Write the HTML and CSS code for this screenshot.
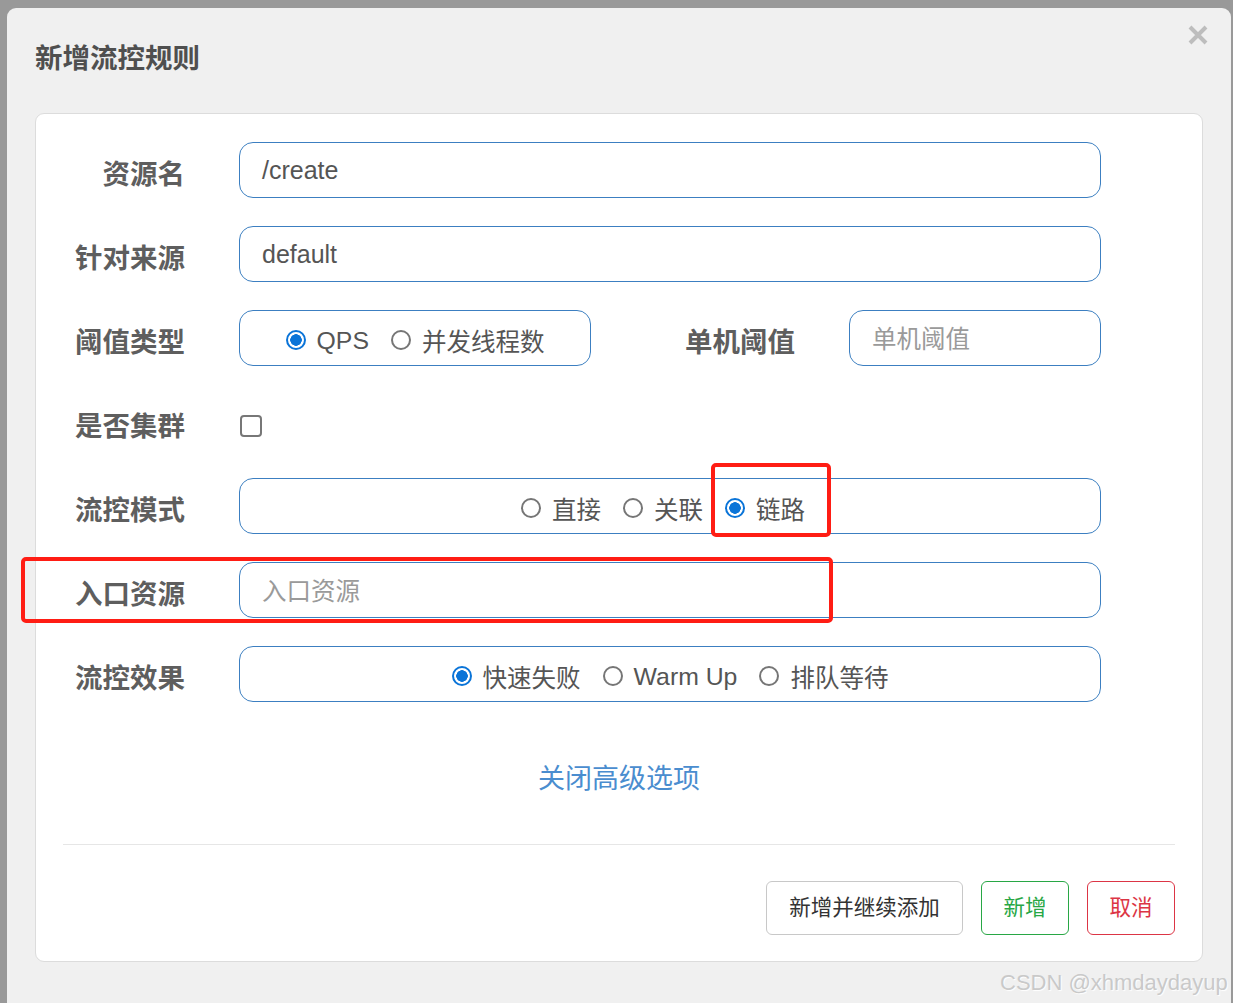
FILE: index.html
```html
<!DOCTYPE html>
<html lang="zh-CN">
<head>
<meta charset="utf-8">
<title>新增流控规则</title>
<link rel="stylesheet" href="styles.css">
</head>
<body>
<div class="modal">
  <div class="modal-header">
    <h3 class="modal-title">新增流控规则</h3>
    <span class="close" aria-label="关闭">
      <svg width="22" height="22" viewBox="0 0 22 22"><path d="M3 3 L19 19 M19 3 L3 19" stroke="#bdbdbd" stroke-width="4" fill="none"/></svg>
    </span>
  </div>
  <div class="card">
    <div class="form-row">
      <label class="label">资源名</label>
      <div class="control input"><span class="value">/create</span></div>
    </div>
    <div class="form-row">
      <label class="label">针对来源</label>
      <div class="control input"><span class="value">default</span></div>
    </div>
    <div class="form-row">
      <label class="label">阈值类型</label>
      <div class="group group-small">
        <span class="radio checked"></span><span class="rtext latin">QPS</span>
        <span class="radio"></span><span class="rtext">并发线程数</span>
      </div>
      <label class="label label-mid">单机阈值</label>
      <div class="input input-small"><span class="placeholder">单机阈值</span></div>
    </div>
    <div class="form-row">
      <label class="label">是否集群</label>
      <div class="check-wrap"><span class="checkbox"></span></div>
    </div>
    <div class="form-row">
      <label class="label">流控模式</label>
      <div class="control group group-mode">
        <span class="radio"></span><span class="rtext">直接</span>
        <span class="radio"></span><span class="rtext">关联</span>
        <span class="radio checked"></span><span class="rtext">链路</span>
      </div>
    </div>
    <div class="form-row">
      <label class="label">入口资源</label>
      <div class="control input"><span class="placeholder">入口资源</span></div>
    </div>
    <div class="form-row">
      <label class="label">流控效果</label>
      <div class="control group">
        <span class="radio checked"></span><span class="rtext">快速失败</span>
        <span class="radio"></span><span class="rtext latin">Warm Up</span>
        <span class="radio"></span><span class="rtext">排队等待</span>
      </div>
    </div>
    <div class="toggle-link">关闭高级选项</div>
    <hr class="divider">
    <div class="footer">
      <button class="btn btn-default">新增并继续添加</button>
      <button class="btn btn-success">新增</button>
      <button class="btn btn-danger">取消</button>
    </div>
  </div>
</div>
<div class="mark mark-1"></div>
<div class="mark mark-2"></div>
<div class="watermark">CSDN @xhmdaydayup</div>
</body>
</html>
```

FILE: styles.css
```css
html, body {
  margin: 0;
  padding: 0;
  height: 100%;
  overflow: hidden;
}
body {
  background: #999999;
  font-family: "Liberation Sans", "Noto Sans CJK SC", sans-serif;
  position: relative;
}
.modal {
  margin: 8px 2px 0 7px;
  height: 1010px;
  background: #f0f0f0;
  border-radius: 9px 9px 0 0;
  box-sizing: border-box;
}
.modal-header {
  position: relative;
  padding: 30px 28px 39px 28px;
}
.modal-title {
  margin: 0;
  font-family: "Noto Sans CJK SC", sans-serif;
  font-size: 27.5px;
  line-height: 36px;
  font-weight: 700;
  color: #4f4f4f;
}
.close {
  position: absolute;
  right: 22px;
  top: 16px;
  width: 22px;
  height: 22px;
}
.card {
  margin: 0 28px 0 28px;
  background: #ffffff;
  border: 1px solid #dcdcdc;
  border-radius: 9px;
  padding: 28px 27px 26px 27px;
}
.form-row {
  display: flex;
  align-items: center;
  height: 56px;
  margin-bottom: 28px;
}
.label {
  width: 122px;
  margin-right: 54px;
  text-align: right;
  font-family: "Noto Sans CJK SC", sans-serif;
  font-size: 27.5px;
  font-weight: 700;
  color: #5e5e5e;
  padding-top: 3px;
  flex: none;
}
.label-mid {
  width: 204px;
  margin-right: 54px;
}
.control {
  width: 862px;
}
.input, .group {
  height: 56px;
  box-sizing: border-box;
  border: 1px solid #3c7fc1;
  border-radius: 14px;
  display: flex;
  align-items: center;
  flex: none;
}
.input {
  padding-left: 22px;
  font-size: 25px;
}
.input-small {
  width: 252px;
}
.value {
  color: #555555;
  font-family: "Liberation Sans", "Noto Sans CJK SC", sans-serif;
}
.placeholder {
  color: #9a9a9a;
  font-family: "Noto Sans CJK SC", sans-serif;
  font-size: 24.5px;
  margin-top: -2px;
}
.group {
  justify-content: center;
  padding-top: 7px;
}
.group-small {
  width: 352px;
}
.group-mode {
  padding-right: 14px;
}
.radio {
  width: 20px;
  height: 20px;
  box-sizing: border-box;
  border: 2px solid #767676;
  border-radius: 50%;
  margin-right: 11px;
  margin-top: -4px;
  flex: none;
  background: #fff;
}
.radio.checked {
  border-color: #0a74d8;
  background: radial-gradient(circle, #0a74d8 0 5.5px, #ffffff 6px);
}
.rtext {
  font-family: "Noto Sans CJK SC", sans-serif;
  font-size: 24.5px;
  color: #555555;
  margin-right: 22px;
  line-height: 1;
}
.rtext:last-child {
  margin-right: 0;
}
.rtext.latin {
  font-family: "Liberation Sans", sans-serif;
  font-size: 24.8px;
}
.check-wrap {
  display: flex;
  align-items: center;
}
.checkbox {
  width: 22px;
  height: 22px;
  box-sizing: border-box;
  border: 2px solid #777777;
  border-radius: 4px;
  margin-left: 1px;
  margin-top: 8px;
  display: block;
}
.toggle-link {
  margin: 57px 0 0 0;
  text-align: center;
  font-family: "Noto Sans CJK SC", sans-serif;
  font-size: 27px;
  line-height: 36px;
  color: #4a8dcf;
}
.divider {
  margin: 49px 0 0 0;
  border: 0;
  border-top: 1px solid #e6e6e6;
  height: 0;
}
.footer {
  display: flex;
  justify-content: flex-end;
  gap: 18px;
  margin-top: 36px;
}
.btn {
  height: 54px;
  box-sizing: border-box;
  background: #fff;
  border-radius: 6px;
  font-family: "Noto Sans CJK SC", sans-serif;
  font-size: 21.5px;
  line-height: 1;
  padding: 0 22px 5px 22px;
  border: 1px solid #c8c8c8;
  color: #333;
}
.btn-default {
  width: 197px;
}
.btn-success {
  width: 88px;
  border-color: #28a745;
  color: #28a745;
  padding: 0 0 5px 0;
}
.btn-danger {
  width: 88px;
  border-color: #dc3545;
  color: #dc3545;
  padding: 0 0 5px 0;
}
.mark {
  position: absolute;
  border: 4px solid #ff1d14;
  border-radius: 5px;
  box-sizing: border-box;
}
.mark-1 {
  left: 711px;
  top: 463px;
  width: 120px;
  height: 74px;
}
.mark-2 {
  left: 21px;
  top: 557px;
  width: 812px;
  height: 66px;
}
.watermark {
  position: absolute;
  left: 1000px;
  top: 969px;
  font-family: "Liberation Sans", sans-serif;
  font-size: 22px;
  line-height: 28px;
  color: #c9c9c9;
  text-shadow: 1px 1px 1px #ffffff;
  white-space: nowrap;
}
```
